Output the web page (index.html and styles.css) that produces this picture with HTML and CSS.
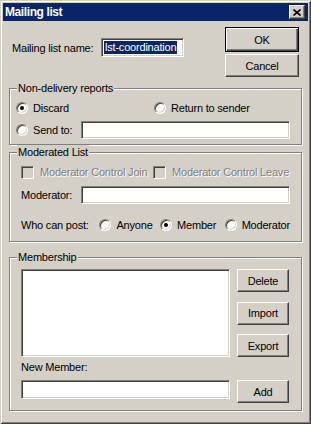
FILE: index.html
```html
<!DOCTYPE html>
<html lang="en">
<head>
  <meta charset="UTF-8">
  <title>Mailing list</title>
  <link rel="stylesheet" href="styles.css">
</head>
<body>

  <div class="window">

    <!-- Title bar -->
    <div class="titlebar">
      <span class="title">Mailing list</span>
      <button class="close">
        <svg width="8" height="7" viewBox="0 0 8 7"><path d="M0.5 0.5 L7.5 6.5 M7.5 0.5 L0.5 6.5" stroke="#000" stroke-width="1.6" fill="none"/></svg>
      </button>
    </div>

    <div class="content">

      <!-- Name + dialog buttons -->
      <div class="top">
        <div class="name-row">
          <span class="name-label">Mailing list name:</span>
          <div class="field name-field"><span class="selected">lst-coordination</span></div>
        </div>
        <div class="dialog-buttons">
          <button class="btn default">OK</button>
          <button class="btn">Cancel</button>
        </div>
      </div>

      <!-- Non-delivery reports -->
      <div class="group ndr">
        <div class="group-title">Non-delivery reports</div>
        <div class="row">
          <span class="opt discard"><span class="radio checked"></span>Discard</span>
          <span class="opt"><span class="radio"></span>Return to sender</span>
        </div>
        <div class="row">
          <span class="opt send-to"><span class="radio"></span>Send to:</span>
          <div class="field wide"></div>
        </div>
      </div>

      <!-- Moderated list -->
      <div class="group moderated">
        <div class="group-title">Moderated List</div>
        <div class="row">
          <span class="opt disabled join"><span class="check"></span>Moderator Control Join</span>
          <span class="opt disabled"><span class="check"></span>Moderator Control Leave</span>
        </div>
        <div class="row moderator-row">
          <span class="moderator-label">Moderator:</span>
          <div class="field wide"></div>
        </div>
        <div class="row post-row">
          <span class="post-label">Who can post:</span>
          <span class="opt anyone"><span class="radio"></span>Anyone</span>
          <span class="opt member"><span class="radio checked"></span>Member</span>
          <span class="opt"><span class="radio"></span>Moderator</span>
        </div>
      </div>

      <!-- Membership -->
      <div class="group membership">
        <div class="group-title">Membership</div>
        <div class="members">
          <div class="field listbox"></div>
          <div class="side-buttons">
            <button class="btn small">Delete</button>
            <button class="btn small">Import</button>
            <button class="btn small">Export</button>
          </div>
        </div>
        <div class="new-label">New Member:</div>
        <div class="new-row">
          <div class="field new-field"></div>
          <button class="btn small">Add</button>
        </div>
      </div>

    </div>
  </div>

</body>
</html>
```

FILE: styles.css
```css
/* General Body Styles */
body {
  margin: 0;
  background: #d4d0c8;
  font-family: "Liberation Sans", Arial, sans-serif;
  font-size: 11px;
  letter-spacing: -0.2px;
  color: #000;
}

/* Window frame */
.window {
  width: 311px;
  height: 424px;
  box-sizing: border-box;
  padding: 3px;
  background: #d4d0c8;
  box-shadow: inset 1px 1px #d4d0c8, inset -1px -1px #404040, inset 2px 2px #fff, inset -2px -2px #808080;
}

.titlebar {
  height: 18px;
  display: flex;
  align-items: center;
  padding: 0 3px 0 2px;
  background: #0a246a;
}

.title {
  flex: 1;
  color: #fff;
  font-weight: bold;
  font-size: 12px;
  letter-spacing: -0.4px;
}

.close {
  width: 16px;
  height: 14px;
  padding: 0;
  display: flex;
  align-items: center;
  justify-content: center;
  background: #d4d0c8;
  border: 1px solid;
  border-color: #fff #404040 #404040 #fff;
  box-shadow: inset -1px -1px #808080;
}

.content {
  padding: 0 6px;
}

/* Buttons */
button {
  font-family: inherit;
  font-size: 11px;
  letter-spacing: inherit;
  color: #000;
}

.btn {
  box-sizing: border-box;
  width: 74px;
  height: 23px;
  padding: 0;
  background: #d4d0c8;
  border: 1px solid;
  border-color: #fff #404040 #404040 #fff;
  box-shadow: inset -1px -1px #808080;
}

.btn.default {
  height: 25px;
  border: 1px solid #000;
  box-shadow: inset 1px 1px #fff, inset -1px -1px #404040, inset -2px -2px #808080;
}

.btn.small {
  width: 52px;
}

/* Sunken text fields */
.field {
  box-sizing: border-box;
  height: 18px;
  background: #fff;
  border: 1px solid;
  border-color: #808080 #fff #fff #808080;
  box-shadow: inset 1px 1px #404040, inset -1px -1px #d4d0c8;
}

/* Top row */
.top {
  height: 67px;
  display: flex;
  padding-left: 3px;
}

.name-row {
  display: flex;
  align-items: center;
  margin-top: 17px;
  height: 19px;
}

.name-label {
  width: 89px;
}

.name-field {
  width: 83px;
  height: 19px;
  padding: 2px 0 0 2px;
}

.selected {
  display: inline-block;
  line-height: 13px;
  padding: 0 1px;
  background: #0a246a;
  color: #fff;
}

.dialog-buttons {
  margin: 6px 3px 0 auto;
  display: flex;
  flex-direction: column;
  gap: 2px;
}

/* Group boxes */
.group {
  border: 1px solid #808080;
  box-shadow: inset 1px 1px #fff, 1px 1px #fff;
  padding: 0 11px 7px 11px;
}

.group-title {
  width: fit-content;
  height: 14px;
  line-height: 14px;
  margin: -8px 0 0 -4px;
  padding: 0 1px;
  background: #d4d0c8;
}

.row {
  display: flex;
  align-items: center;
  height: 18px;
  margin-top: 4px;
}

.opt {
  display: flex;
  align-items: center;
  gap: 5px;
  white-space: nowrap;
}

.radio {
  position: relative;
  box-sizing: border-box;
  width: 12px;
  height: 12px;
  border-radius: 50%;
  background: #fff;
  border: 1px solid;
  border-color: #808080 #fff #fff #808080;
  box-shadow: inset 1px 1px #404040, inset -1px -1px #d4d0c8;
}

.radio.checked::after {
  content: "";
  position: absolute;
  left: 3px;
  top: 3px;
  width: 4px;
  height: 4px;
  border-radius: 50%;
  background: #000;
}

.check {
  flex: none;
  box-sizing: border-box;
  width: 13px;
  height: 13px;
  background: #d4d0c8;
  border: 1px solid;
  border-color: #808080 #fff #fff #808080;
  box-shadow: inset 1px 1px #404040, inset -1px -1px #d4d0c8;
}

.disabled {
  color: #808080;
  text-shadow: 1px 1px #fff;
  gap: 6px;
}

.wide {
  width: 209px;
}

/* Non-delivery reports */
.ndr {
  padding-left: 6px;
  padding-bottom: 5px;
}

.ndr .group-title {
  margin-left: 1px;
}

.discard {
  width: 138px;
}

.send-to {
  width: 65px;
}

/* Moderated list */
.moderated {
  margin-top: 7px;
}

.join {
  flex: none;
  width: 132px;
}

.moderator-row {
  margin-top: 5px;
}

.moderator-label {
  width: 60px;
}

.post-row {
  margin-top: 12px;
}

.post-label {
  width: 79px;
}

.anyone {
  width: 61px;
}

.member {
  width: 65px;
}

/* Membership */
.membership {
  margin-top: 15px;
}

.members {
  display: flex;
  gap: 7px;
  margin-top: 5px;
}

.listbox {
  width: 209px;
  height: 88px;
}

.side-buttons {
  display: flex;
  flex-direction: column;
  justify-content: space-between;
}

.new-label {
  height: 14px;
  line-height: 14px;
  margin-top: 3px;
}

.new-row {
  display: flex;
  align-items: flex-start;
  gap: 7px;
  margin-top: 6px;
}

.new-field {
  width: 209px;
  height: 19px;
}
```
